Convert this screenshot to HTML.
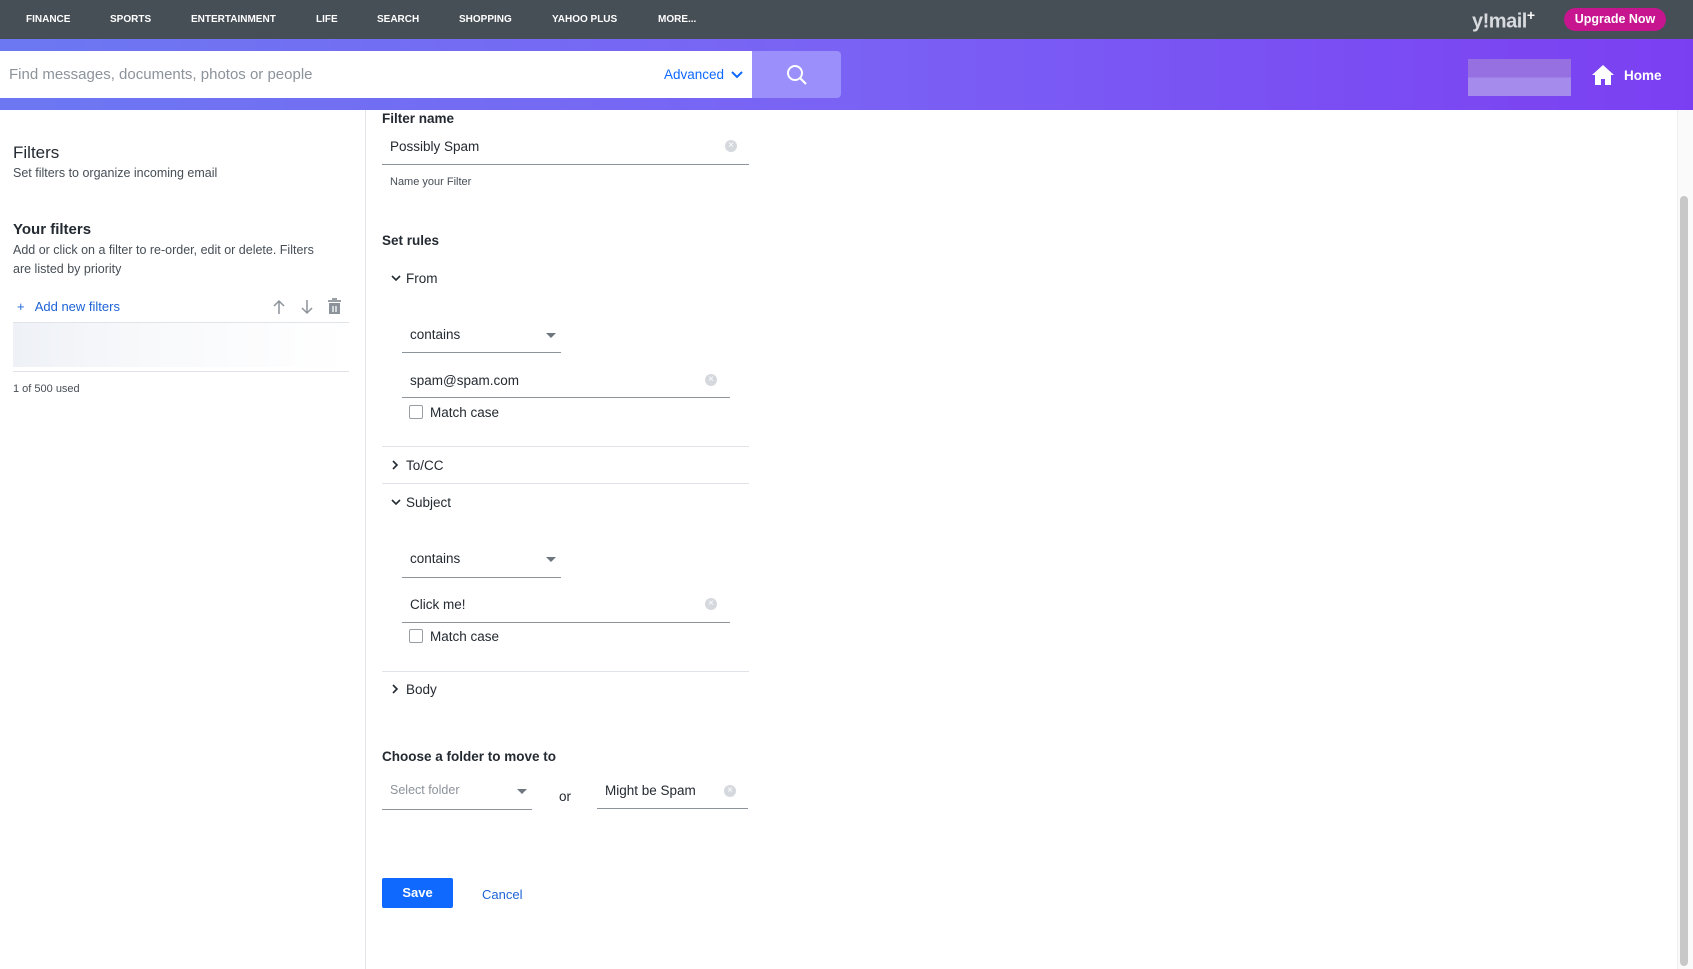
<!DOCTYPE html>
<html><head><meta charset="utf-8"><style>
*{margin:0;padding:0;box-sizing:border-box}
body{width:1693px;height:969px;overflow:hidden;background:#fff;font-family:"Liberation Sans",Arial,sans-serif;color:#232a31;position:relative}
.a{position:absolute;white-space:nowrap}
.top{position:absolute;left:0;top:0;width:1693px;height:39px;background:#464e56}
.nav{top:14px;font-size:10px;font-weight:bold;color:#fff}
.band{position:absolute;left:0;top:39px;width:1693px;height:71px;background:linear-gradient(90deg,#6c78f2 0%,#7a62f4 50%,#7b3ff2 100%)}
.gray{color:#464e56}
.ul{position:absolute;height:1px;background:#8c939a}
.sep{position:absolute;left:382px;width:367px;height:1px;background:#e0e4e9}
.clr{position:absolute;width:12px;height:12px;border-radius:50%;background:#d5d9de;color:#fff;font-size:10px;line-height:12px;text-align:center}
.cb{position:absolute;width:14px;height:14px;border:1px solid #979ea8;border-radius:2px;background:#fff}
.lbl{font-size:13.5px;color:#232a31}
.h{font-size:13.5px;font-weight:bold}
.caret{position:absolute;width:0;height:0;border-left:5px solid transparent;border-right:5px solid transparent;border-top:5px solid #6e7780}
</style></head><body>
<div class="top"></div>
<div class="a nav" style="left:26px">FINANCE</div>
<div class="a nav" style="left:110px">SPORTS</div>
<div class="a nav" style="left:191px">ENTERTAINMENT</div>
<div class="a nav" style="left:316px">LIFE</div>
<div class="a nav" style="left:377px">SEARCH</div>
<div class="a nav" style="left:459px">SHOPPING</div>
<div class="a nav" style="left:552px">YAHOO PLUS</div>
<div class="a nav" style="left:658px">MORE...</div>
<div class="a" style="left:1472px;top:7px;font-size:20px;font-weight:bold;color:#d8dbde;letter-spacing:-0.5px">y!mail<sup style="font-size:14px;color:#fff">+</sup></div>
<div class="a" style="left:1564px;top:8px;width:102px;height:23px;border-radius:12px;background:#c7158f;color:#fff;font-size:12.5px;font-weight:bold;text-align:center;line-height:23px">Upgrade Now</div>
<div class="band"></div>
<div class="a" style="left:0;top:51px;width:752px;height:47px;background:#fff"></div>
<div class="a" style="left:9px;top:66px;font-size:15px;color:#8c939a">Find messages, documents, photos or people</div>
<div class="a" style="left:664px;top:67px;font-size:13.5px;color:#0f69ff">Advanced <svg width="12" height="8" viewBox="0 0 12 8" style="margin-left:3px"><path d="M1 1l5 5 5-5" stroke="#0f69ff" stroke-width="2" fill="none"/></svg></div>
<div class="a" style="left:752px;top:51px;width:89px;height:47px;background:#9a8ffb;border-radius:0 4px 4px 0"></div>
<svg class="a" style="left:786px;top:64px" width="22" height="22" viewBox="0 0 22 22"><circle cx="9" cy="9" r="7" stroke="#fff" stroke-width="2" fill="none"/><path d="M14 14l6 6" stroke="#fff" stroke-width="2.2"/></svg>
<div class="a" style="left:1468px;top:59px;width:103px;height:37px;background:linear-gradient(180deg,#9670e0 50%,#a58bec 50%)"></div>
<svg class="a" style="left:1591px;top:63px" width="24" height="24" viewBox="0 0 24 24"><path d="M12 2L1 12h3v10h6v-6h4v6h6V12h3z" fill="#fff"/></svg>
<div class="a" style="left:1624px;top:68px;font-size:13.5px;font-weight:bold;color:#fff">Home</div>

<div class="a" style="left:365px;top:110px;width:1px;height:859px;background:#e0e4e9"></div>
<div class="a" style="left:13px;top:143px;font-size:17px">Filters</div>
<div class="a gray" style="left:13px;top:166px;font-size:12.5px">Set filters to organize incoming email</div>
<div class="a" style="left:13px;top:221px;font-size:15px;font-weight:bold">Your filters</div>
<div class="a gray" style="left:13px;top:241px;font-size:12.5px;line-height:19px">Add or click on a filter to re-order, edit or delete. Filters<br>are listed by priority</div>
<div class="a" style="left:17px;top:299px;font-size:13px;color:#1d63d6">+&nbsp;&nbsp; Add new filters</div>
<svg class="a" style="left:272px;top:299px" width="14" height="16" viewBox="0 0 14 16"><path d="M7 15V2M2 7l5-5 5 5" stroke="#8c939a" stroke-width="1.5" fill="none"/></svg>
<svg class="a" style="left:300px;top:299px" width="14" height="16" viewBox="0 0 14 16"><path d="M7 1v13M2 9l5 5 5-5" stroke="#8c939a" stroke-width="1.5" fill="none"/></svg>
<svg class="a" style="left:327px;top:298px" width="15" height="17" viewBox="0 0 15 17"><path d="M1 3h13M5 1h5" stroke="#8c939a" stroke-width="1.8"/><path d="M2 5h11v11H2z" fill="#8c939a"/><path d="M6 8v6M9 8v6" stroke="#fff" stroke-width="1.3"/></svg>
<div class="a" style="left:13px;top:322px;width:336px;height:1px;background:#e0e4e9"></div>
<div class="a" style="left:13px;top:323px;width:336px;height:44px;background:linear-gradient(90deg,#eef1f6,#f8f9fb 40%,#fff)"></div>
<div class="a" style="left:13px;top:371px;width:336px;height:1px;background:#e0e4e9"></div>
<div class="a gray" style="left:13px;top:383px;font-size:11px">1 of 500 used</div>

<div class="a h" style="left:382px;top:111px">Filter name</div>
<div class="a lbl" style="left:390px;top:139px">Possibly Spam</div>
<div class="clr" style="left:725px;top:140px">×</div>
<div class="ul" style="left:382px;top:164px;width:367px"></div>
<div class="a gray" style="left:390px;top:176px;font-size:11px">Name your Filter</div>
<div class="a h" style="left:382px;top:233px">Set rules</div>

<svg class="a" style="left:391px;top:274px" width="10" height="8" viewBox="0 0 10 8"><path d="M1 2l4 4 4-4" stroke="#232a31" stroke-width="1.6" fill="none"/></svg>
<div class="a lbl" style="left:406px;top:271px">From</div>
<div class="a lbl" style="left:410px;top:327px">contains</div>
<div class="caret" style="left:546px;top:333px"></div>
<div class="ul" style="left:402px;top:352px;width:159px"></div>
<div class="a lbl" style="left:410px;top:373px">spam@spam.com</div>
<div class="clr" style="left:705px;top:374px">×</div>
<div class="ul" style="left:402px;top:397px;width:328px"></div>
<div class="cb" style="left:409px;top:405px"></div>
<div class="a lbl" style="left:430px;top:405px">Match case</div>
<div class="sep" style="top:446px"></div>
<svg class="a" style="left:391px;top:460px" width="8" height="10" viewBox="0 0 8 10"><path d="M2 1l4 4-4 4" stroke="#232a31" stroke-width="1.6" fill="none"/></svg>
<div class="a lbl" style="left:406px;top:458px">To/CC</div>
<div class="sep" style="top:483px"></div>
<svg class="a" style="left:391px;top:498px" width="10" height="8" viewBox="0 0 10 8"><path d="M1 2l4 4 4-4" stroke="#232a31" stroke-width="1.6" fill="none"/></svg>
<div class="a lbl" style="left:406px;top:495px">Subject</div>
<div class="a lbl" style="left:410px;top:551px">contains</div>
<div class="caret" style="left:546px;top:557px"></div>
<div class="ul" style="left:402px;top:577px;width:159px"></div>
<div class="a lbl" style="left:410px;top:597px">Click me!</div>
<div class="clr" style="left:705px;top:598px">×</div>
<div class="ul" style="left:402px;top:622px;width:328px"></div>
<div class="cb" style="left:409px;top:629px"></div>
<div class="a lbl" style="left:430px;top:629px">Match case</div>
<div class="sep" style="top:671px"></div>
<svg class="a" style="left:391px;top:684px" width="8" height="10" viewBox="0 0 8 10"><path d="M2 1l4 4-4 4" stroke="#232a31" stroke-width="1.6" fill="none"/></svg>
<div class="a lbl" style="left:406px;top:682px">Body</div>

<div class="a h" style="left:382px;top:749px">Choose a folder to move to</div>
<div class="a" style="left:390px;top:783px;font-size:12.5px;color:#8c939a">Select folder</div>
<div class="caret" style="left:517px;top:789px"></div>
<div class="ul" style="left:382px;top:809px;width:150px"></div>
<div class="a lbl" style="left:559px;top:789px">or</div>
<div class="a lbl" style="left:605px;top:783px">Might be Spam</div>
<div class="clr" style="left:724px;top:785px">×</div>
<div class="ul" style="left:597px;top:808px;width:151px"></div>

<div class="a" style="left:382px;top:878px;width:71px;height:30px;background:#0f69ff;border-radius:2px;color:#fff;font-size:13px;font-weight:bold;text-align:center;line-height:30px">Save</div>
<div class="a" style="left:482px;top:887px;font-size:13px;color:#1d63d6">Cancel</div>

<div class="a" style="left:1677px;top:110px;width:16px;height:859px;background:#fafafa;border-left:1px solid #eee"></div>
<div class="a" style="left:1680px;top:196px;width:8px;height:770px;border-radius:4px;background:#c8c8c8"></div>
</body></html>
